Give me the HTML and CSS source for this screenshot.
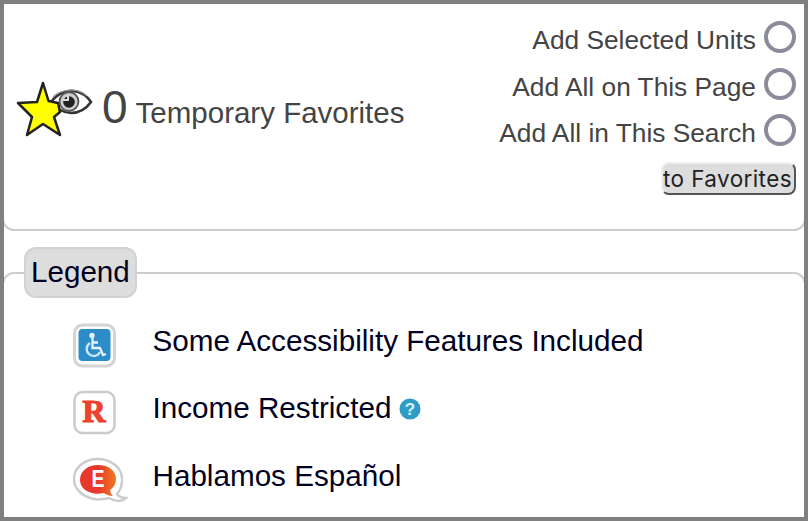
FILE: index.html
```
<!DOCTYPE html>
<html lang="en">
<head>
	<meta charset="utf-8">
	<title>Favorites</title>
	<link rel="stylesheet" href="styles.css">
</head>
<body>
	<form class="favorites">
		<div class="temporary">
			<svg class="star" width="78" height="60" viewBox="0 0 78 60">
				<path d="M35 21C42 12 51 9 58 10C65 11 71 15 75 21C70 28 63 32 55 32C47 32 41 28 35 21Z" fill="#fff" stroke="#333" stroke-width="2.600"/>
				<path d="M37 16C45 8 62 6 71 15" fill="none" stroke="#999" stroke-width="1.3"/>
				<circle cx="53" cy="20.500" r="9.5" fill="#ccc" stroke="#555" stroke-width="1.8"/>
				<circle cx="53" cy="21" r="5.8" fill="#222"/>
				<path d="M52 14v5h-5" fill="none" stroke="#ddd" stroke-width="2"/>
				<path d="M27 2L32.500 20L42 22L44 31L38 36L44 54L27 43L11 54L16 36L2 22L21 21Z" fill="#ff0" stroke="#222" stroke-width="2.500" stroke-linejoin="round"/>
			</svg>
			<span class="count">0</span>
			<span class="text">Temporary Favorites</span>
		</div>
		<div class="options">
			<label>Add Selected Units<input type="radio" name="add"></label>
			<label>Add All on This Page<input type="radio" name="add"></label>
			<label>Add All in This Search<input type="radio" name="add"></label>
			<button type="button" class="button">to Favorites</button>
		</div>
	</form>
	<fieldset class="legend">
		<legend>Legend</legend>
		<div class="row">
			<svg class="icon" width="56" height="48" viewBox="0 0 56 48">
				<rect x="1.500" y="3" width="40" height="41" rx="8" fill="#fff" stroke="#d4d4d4" stroke-width="3"/>
				<rect x="5.500" y="7" width="32" height="32" rx="4" fill="#2c8bc9"/>
				<circle cx="19" cy="13.500" r="2.700" fill="#e4f4ff"/>
				<path d="M19.500 16V26H27L30 33L33 32M19.500 20.500H25" fill="none" stroke="#e4f4ff" stroke-width="2.300"/>
				<path d="M17 21A7 7 0 1 0 27 30" fill="none" stroke="#cce8f8" stroke-width="2.300"/>
			</svg>
			<span>Some Accessibility Features Included</span>
		</div>
		<div class="row">
			<svg class="icon" width="56" height="48" viewBox="0 0 56 48">
				<rect x="1.500" y="3" width="40" height="41" rx="8" fill="#fff" stroke="#ccc" stroke-width="2.500"/>
				<text class="r" x="21" y="33" text-anchor="middle" textLength="23" lengthAdjust="spacingAndGlyphs">R</text>
			</svg>
			<span>Income Restricted</span>
			<svg class="help" width="22" height="22" viewBox="0 0 22 22">
				<circle cx="11" cy="11" r="10.500" fill="#2f9cc6"/>
				<text class="q" x="11" y="17" text-anchor="middle">?</text>
			</svg>
		</div>
		<div class="row">
			<svg class="icon" width="56" height="48" viewBox="0 0 56 48">
				<path d="M25 2C37 2 49 10 49 22C49 29 47 34 44 37C46 40 49 41 53 41C49 45 42 45 36 41C18 46 1 36 1 22C1 10 12 2 25 2Z" fill="#fff" stroke="#ccc" stroke-width="2.400"/>
				<defs>
					<linearGradient id="orange"><stop offset=".5" stop-color="#e8382b"/><stop offset="1" stop-color="#f07a20"/></linearGradient>
				</defs>
				<path d="M25 8C36 8 43 14 43 22C43 27 40 31 37 33C37 36 39 38 40 39C36 39 33 37 31 36C17 39 7 32 7 23C7 14 15 8 25 8Z" fill="url(#orange)"/>
				<text class="e" x="25" y="30" text-anchor="middle" textLength="13" lengthAdjust="spacingAndGlyphs">E</text>
			</svg>
			<span>Hablamos Español</span>
		</div>
	</fieldset>
</body>
</html>
```
FILE: styles.css
```
*{
	box-sizing:border-box;
}
body{
	margin:0;
	height:521px;
	border:4px solid #808080;
	overflow:hidden;
	font-family:"Liberation Sans", Arial, sans-serif;
	color:#000022;
	background:#fff;
}
/* top box with the favorites count */
.favorites{
	display:flex;
	justify-content:space-between;
	height:237px;
	margin:-10px -2px 0;
	padding:20px 8px 0 12px;
	border:2px solid #ccc;
	border-radius:12px;
	color:#444;
}
.temporary{
	display:flex;
	align-items:baseline;
	height:64px;
	margin-top:61px;
}
.star{
	align-self:flex-start;
	margin:4px 8px 0 0;
}
.count{
	font-size:46px;
	line-height:60px;
	margin-right:8px;
}
.text{
	font-size:29.5px;
}
.options{
	display:flex;
	flex-direction:column;
	align-items:flex-end;
}
.options label{
	display:flex;
	align-items:center;
	height:46.7px;
	padding-top:2px;
	font-size:26.3px;
}
.options input{
	appearance:none;
	width:32px;
	height:32px;
	margin:-7px 0 0 8px;
	border:4px solid #8c8b9b;
	border-radius:50%;
	background:#fff;
}
.button{
	width:135px;
	height:33px;
	margin-top:6px;
	padding:0;
	border:2px solid;
	border-color:#eee #555 #555 #eee;
	border-radius:8px;
	background:#ddd;
	font-family:Inter, sans-serif;
	font-size:22.5px;
	letter-spacing:.4px;
	line-height:29px;
	text-indent:-2px;
	color:#222;
	white-space:nowrap;
}
/* icons explained */
.legend{
	height:300px;
	margin:16px -2px 0;
	padding:14px 0 0 69px;
	border:2px solid #ccc;
	border-radius:12px;
}
.legend legend{
	height:51px;
	margin-left:-49px;
	padding:0 5px;
	border:2px solid #d2d2d2;
	border-radius:12px;
	background:#ddd;
	font-size:29.6px;
	line-height:46px;
}
.row{
	display:flex;
	align-items:center;
	height:67.5px;
	font-size:29.65px;
}
.row span{
	margin:-10px 0 0 23.5px;
}
.help{
	margin:-9px 0 0 8px;
}
.r{
	font:bold 31px "Liberation Serif", serif;
	fill:#ee4130;
	stroke:#ee4130;
	stroke-width:1.2;
}
.q{
	font:bold 17px "Liberation Sans", sans-serif;
	fill:#d9f5ff;
}
.e{
	font:bold 23px "Liberation Sans", sans-serif;
	fill:#fff;
}
```
